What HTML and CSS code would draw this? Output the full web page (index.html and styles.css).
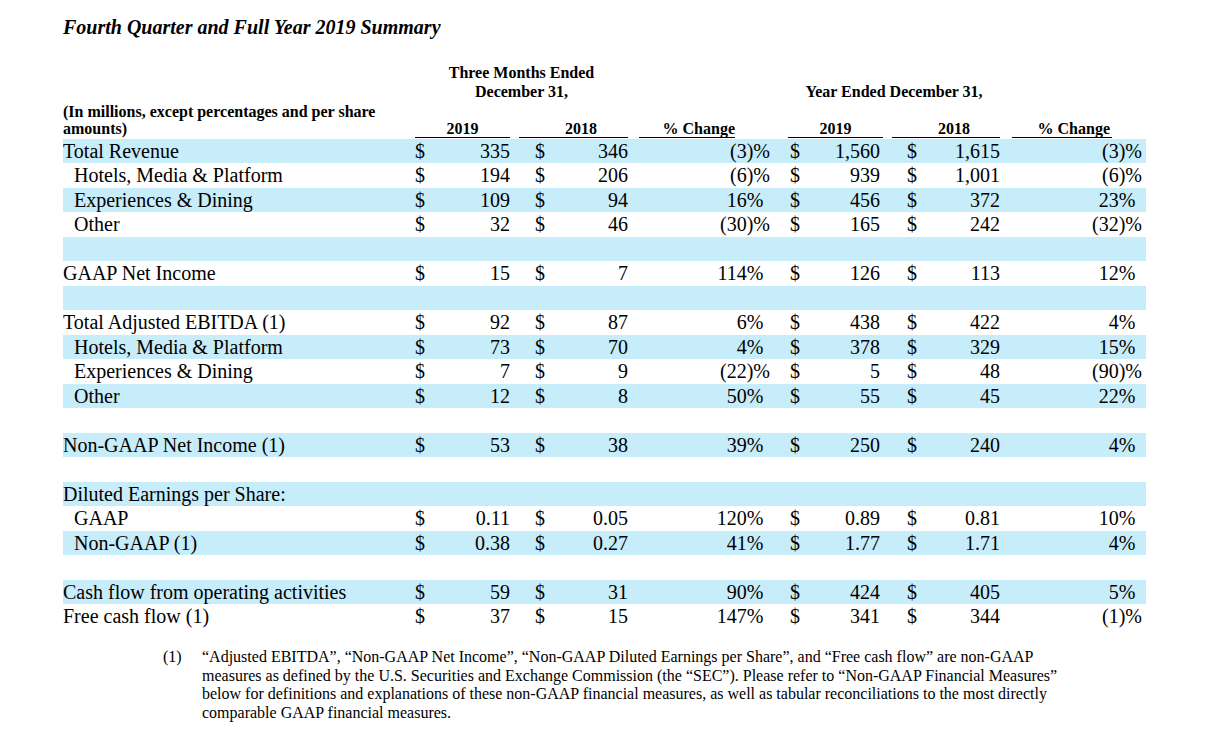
FILE: index.html
```html
<!DOCTYPE html>
<html lang="en">
<head>
<meta charset="utf-8">
<title>Fourth Quarter and Full Year 2019 Summary</title>
<link rel="stylesheet" href="styles.css">
</head>
<body>
<div class="page">
  <h1 class="title">Fourth Quarter and Full Year 2019 Summary</h1>

  <div class="grid head-top">
    <div class="ht q">Three Months Ended<br>December 31,</div>
    <div class="ht y">Year Ended December 31,</div>
  </div>

  <div class="grid head-cols">
    <div class="hl">(In millions, except percentages and per share<br>amounts)</div>
    <div class="hc q1">2019</div>
    <div class="hc q2">2018</div>
    <div class="hc qp">% Change</div>
    <div class="hc y1">2019</div>
    <div class="hc y2">2018</div>
    <div class="hc yp">% Change</div>
  </div>

  <div class="rows">
    <div class="grid row">
      <div class="lbl">Total Revenue</div>
      <div class="m q1"><span>$</span><span>335</span></div>
      <div class="m q2"><span>$</span><span>346</span></div>
      <div class="p qp neg">(3)%</div>
      <div class="m y1"><span>$</span><span>1,560</span></div>
      <div class="m y2"><span>$</span><span>1,615</span></div>
      <div class="p yp neg">(3)%</div>
    </div>
    <div class="grid row">
      <div class="lbl ind">Hotels, Media &amp; Platform</div>
      <div class="m q1"><span>$</span><span>194</span></div>
      <div class="m q2"><span>$</span><span>206</span></div>
      <div class="p qp neg">(6)%</div>
      <div class="m y1"><span>$</span><span>939</span></div>
      <div class="m y2"><span>$</span><span>1,001</span></div>
      <div class="p yp neg">(6)%</div>
    </div>
    <div class="grid row">
      <div class="lbl ind">Experiences &amp; Dining</div>
      <div class="m q1"><span>$</span><span>109</span></div>
      <div class="m q2"><span>$</span><span>94</span></div>
      <div class="p qp">16%</div>
      <div class="m y1"><span>$</span><span>456</span></div>
      <div class="m y2"><span>$</span><span>372</span></div>
      <div class="p yp">23%</div>
    </div>
    <div class="grid row">
      <div class="lbl ind">Other</div>
      <div class="m q1"><span>$</span><span>32</span></div>
      <div class="m q2"><span>$</span><span>46</span></div>
      <div class="p qp neg">(30)%</div>
      <div class="m y1"><span>$</span><span>165</span></div>
      <div class="m y2"><span>$</span><span>242</span></div>
      <div class="p yp neg">(32)%</div>
    </div>
    <div class="grid row"></div>
    <div class="grid row">
      <div class="lbl">GAAP Net Income</div>
      <div class="m q1"><span>$</span><span>15</span></div>
      <div class="m q2"><span>$</span><span>7</span></div>
      <div class="p qp">114%</div>
      <div class="m y1"><span>$</span><span>126</span></div>
      <div class="m y2"><span>$</span><span>113</span></div>
      <div class="p yp">12%</div>
    </div>
    <div class="grid row"></div>
    <div class="grid row">
      <div class="lbl">Total Adjusted EBITDA (1)</div>
      <div class="m q1"><span>$</span><span>92</span></div>
      <div class="m q2"><span>$</span><span>87</span></div>
      <div class="p qp">6%</div>
      <div class="m y1"><span>$</span><span>438</span></div>
      <div class="m y2"><span>$</span><span>422</span></div>
      <div class="p yp">4%</div>
    </div>
    <div class="grid row">
      <div class="lbl ind">Hotels, Media &amp; Platform</div>
      <div class="m q1"><span>$</span><span>73</span></div>
      <div class="m q2"><span>$</span><span>70</span></div>
      <div class="p qp">4%</div>
      <div class="m y1"><span>$</span><span>378</span></div>
      <div class="m y2"><span>$</span><span>329</span></div>
      <div class="p yp">15%</div>
    </div>
    <div class="grid row">
      <div class="lbl ind">Experiences &amp; Dining</div>
      <div class="m q1"><span>$</span><span>7</span></div>
      <div class="m q2"><span>$</span><span>9</span></div>
      <div class="p qp neg">(22)%</div>
      <div class="m y1"><span>$</span><span>5</span></div>
      <div class="m y2"><span>$</span><span>48</span></div>
      <div class="p yp neg">(90)%</div>
    </div>
    <div class="grid row">
      <div class="lbl ind">Other</div>
      <div class="m q1"><span>$</span><span>12</span></div>
      <div class="m q2"><span>$</span><span>8</span></div>
      <div class="p qp">50%</div>
      <div class="m y1"><span>$</span><span>55</span></div>
      <div class="m y2"><span>$</span><span>45</span></div>
      <div class="p yp">22%</div>
    </div>
    <div class="grid row"></div>
    <div class="grid row">
      <div class="lbl">Non-GAAP Net Income (1)</div>
      <div class="m q1"><span>$</span><span>53</span></div>
      <div class="m q2"><span>$</span><span>38</span></div>
      <div class="p qp">39%</div>
      <div class="m y1"><span>$</span><span>250</span></div>
      <div class="m y2"><span>$</span><span>240</span></div>
      <div class="p yp">4%</div>
    </div>
    <div class="grid row"></div>
    <div class="grid row">
      <div class="lbl">Diluted Earnings per Share:</div>
    </div>
    <div class="grid row">
      <div class="lbl ind">GAAP</div>
      <div class="m q1"><span>$</span><span>0.11</span></div>
      <div class="m q2"><span>$</span><span>0.05</span></div>
      <div class="p qp">120%</div>
      <div class="m y1"><span>$</span><span>0.89</span></div>
      <div class="m y2"><span>$</span><span>0.81</span></div>
      <div class="p yp">10%</div>
    </div>
    <div class="grid row">
      <div class="lbl ind">Non-GAAP (1)</div>
      <div class="m q1"><span>$</span><span>0.38</span></div>
      <div class="m q2"><span>$</span><span>0.27</span></div>
      <div class="p qp">41%</div>
      <div class="m y1"><span>$</span><span>1.77</span></div>
      <div class="m y2"><span>$</span><span>1.71</span></div>
      <div class="p yp">4%</div>
    </div>
    <div class="grid row"></div>
    <div class="grid row">
      <div class="lbl">Cash flow from operating activities</div>
      <div class="m q1"><span>$</span><span>59</span></div>
      <div class="m q2"><span>$</span><span>31</span></div>
      <div class="p qp">90%</div>
      <div class="m y1"><span>$</span><span>424</span></div>
      <div class="m y2"><span>$</span><span>405</span></div>
      <div class="p yp">5%</div>
    </div>
    <div class="grid row">
      <div class="lbl">Free cash flow (1)</div>
      <div class="m q1"><span>$</span><span>37</span></div>
      <div class="m q2"><span>$</span><span>15</span></div>
      <div class="p qp">147%</div>
      <div class="m y1"><span>$</span><span>341</span></div>
      <div class="m y2"><span>$</span><span>344</span></div>
      <div class="p yp neg">(1)%</div>
    </div>
  </div>

  <div class="note">
    <div class="note-num">(1)</div>
    <div class="note-text">“Adjusted EBITDA”, “Non-GAAP Net Income”, “Non-GAAP Diluted Earnings per Share”, and “Free cash flow” are non-GAAP<br>measures as defined by the U.S. Securities and Exchange Commission (the “SEC”). Please refer to “Non-GAAP Financial Measures”<br>below for definitions and explanations of these non-GAAP financial measures, as well as tabular reconciliations to the most directly<br>comparable GAAP financial measures.</div>
  </div>
</div>
</body>
</html>
```

FILE: styles.css
```css
html, body {
  margin: 0;
  padding: 0;
  background: #ffffff;
}

body {
  font-family: "Liberation Serif", "Times New Roman", serif;
  color: #000000;
}

.page {
  width: 1083px;
  padding: 15px 0 0 63px;
}

.title {
  margin: 0;
  font-size: 20px;
  line-height: 24px;
  font-weight: bold;
  font-style: italic;
}

.grid {
  display: grid;
  grid-template-columns: 349px 100px 116px 147px 108px 117px 146px;
}

/* top group headers */
.head-top {
  margin-top: 23.5px;
  font-size: 16px;
  line-height: 19px;
  font-weight: bold;
  text-align: center;
  align-items: end;
}

.ht.q {
  grid-column: 2 / 4;
  padding-left: 3px;
}

.ht.y {
  grid-column: 5 / 7;
  padding-left: 13px;
}

/* column headers */
.head-cols {
  margin-top: 2px;
  font-size: 16px;
  line-height: 17px;
  font-weight: bold;
  align-items: end;
}

.hl {
  padding-bottom: 1px;
}

.hc {
  border-bottom: 1px solid #000000;
  text-align: center;
}

.hc.q1 { margin: 0 2px 0 3px; }
.hc.q2 { margin-left: 7px; padding-left: 15px; }
.hc.qp { margin: 0 40px 0 11px; text-align: right; }
.hc.y1 { margin-left: 13px; }
.hc.y2 { margin-left: 9px; padding-left: 16px; }
.hc.yp { margin: 0 34px 0 12px; text-align: right; padding-right: 2px; }

/* body rows */
.rows {
  margin-top: 1px;
}

.row {
  height: 24.5px;
  font-size: 20px;
  line-height: 24.5px;
  white-space: nowrap;
}

.row:nth-child(odd) {
  background: #c7ecfa;
}

.lbl.ind {
  padding-left: 11px;
}

.m {
  display: flex;
  justify-content: space-between;
}

.m.q1 { padding: 0 2px 0 3px; }
.m.q2 { padding: 0 0 0 23px; }
.m.y1 { padding: 0 3px 0 15px; }
.m.y2 { padding: 0 0 0 24px; }

.p {
  text-align: right;
}

.p.qp { padding-right: 11.7px; }
.p.yp { padding-right: 10.7px; }
.p.qp.neg { padding-right: 5px; }
.p.yp.neg { padding-right: 4px; }

/* footnote */
.note {
  display: flex;
  margin-top: 19.5px;
  padding-left: 100px;
  font-size: 16px;
  line-height: 18.7px;
  white-space: nowrap;
}

.note-num {
  width: 39px;
  flex: none;
}
```
